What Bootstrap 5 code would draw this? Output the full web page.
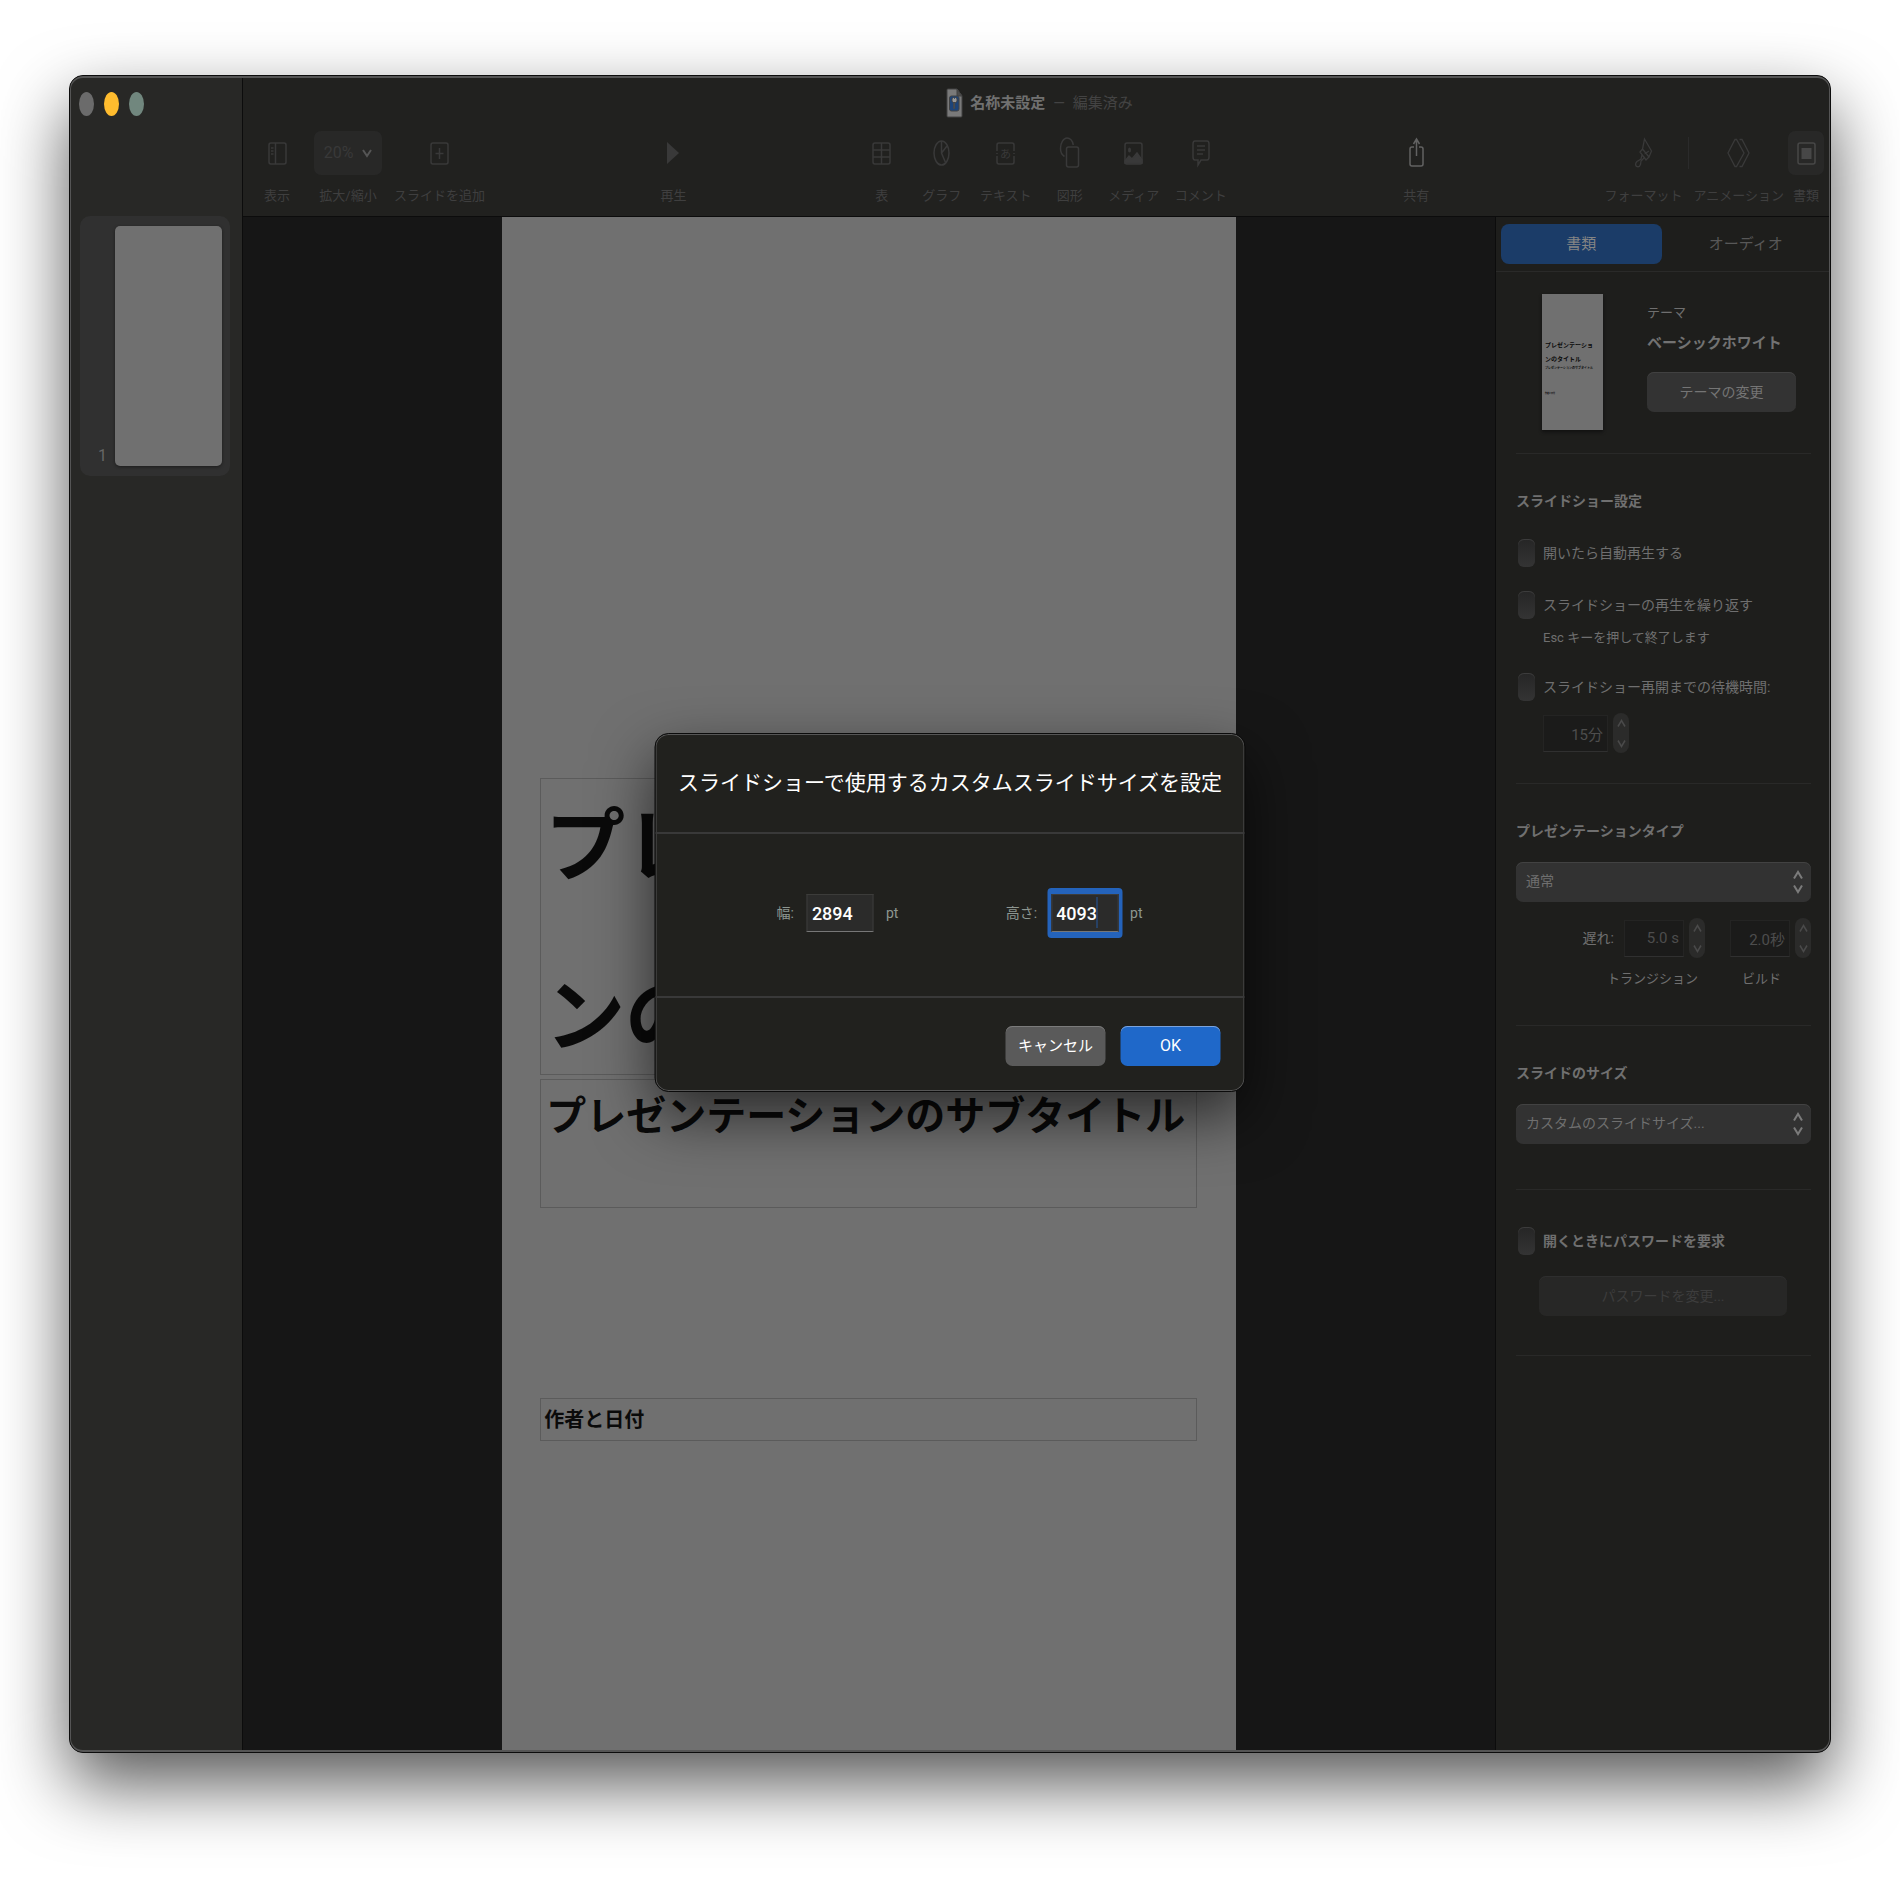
<!DOCTYPE html>
<html lang="ja">
<head>
<meta charset="utf-8">
<meta name="viewport" content="width=device-width, initial-scale=1">
<title>名称未設定</title>
<link href="https://cdn.jsdelivr.net/npm/bootstrap@5.3.0/dist/css/bootstrap.min.css" rel="stylesheet">
<style>
body{background:#fff;font-family:Roboto,"Noto Sans CJK JP",sans-serif;font-size:14px;line-height:20px;color:#6f6f6f;padding:75px 69px 147px}
svg{display:block;fill:none;stroke:currentColor;overflow:visible}
button,input,select{font:inherit;color:inherit}
/* window */
.app-window{background:#161616;border:1px solid #0c0c0c;border-radius:14px;box-shadow:0 31px 70px rgba(0,0,0,.66);overflow:clip}
.app-window::after{content:"";position:absolute;inset:0;border:solid #555;border-width:2px 1px;border-radius:13px;pointer-events:none}
.pane-slides{width:173px;background:#282826;border-right:1px solid #0c0c0c}
.lights{height:140px;padding:16px 0 0 9px;gap:10px}
.light{width:15px;height:24px;border:0;border-radius:50%;padding:0}
.light-close{background:#6b6b6b}.light-min{background:#ffbc2e}.light-zoom{background:#71877e}
.slide-item{margin:0 12px 0 10px;height:260px;padding:10px 8px 10px 0;background:#303030;border-radius:10px;font-size:16px;color:#666}
.slide-page{width:107px;background:#707070;border-radius:5px;box-shadow:0 1px 3px #1c1c1c}
/* toolbar */
.toolbar-top{height:141px;background:#21211f;border-bottom:1px solid #0c0c0c}
.doc-title{height:40px;margin-top:7px;padding-left:7px;gap:8px;font-size:15px;color:#434343}
.doc-title strong{color:#707070}
.tools{height:84px;margin-top:8px;padding:0 6px 0 21px;color:#363636}
.tool{border:0;background:none;padding:0;font-size:13px;line-height:20px;color:#3f3f3f;text-align:center}
.tool .glyph{height:44px;color:#393939}
.tool .glyph-share{color:#626262}
.tool .glyph-doc{width:36px;margin:0 auto;background:#282827;border-radius:7px;color:#474747}
.tool-name{display:block;margin-top:11px;white-space:nowrap}
.tool-zoom{width:68px}
.tool-zoom .glyph{background:#282827;border-radius:7px;gap:9px;font-size:16px}
.tool-zoom svg{color:#555}
.tool-sm{width:56px}.tool-md{width:64px}.tool-lg{width:70px}
.tools,.tools>div,.tool{align-items:flex-start}
.tool-gap{margin-left:4px}
.split{width:1px;height:32px;margin:6px 5px 0;background:#2b2b2b}
/* canvas */
.slide{width:58.6%;background:#707070;color:#0a0a0a;padding:561px 39px 0 38px;font-weight:700}
.ph{border:1px solid #5b5b5b;white-space:nowrap;overflow:visible}
.ph-title{height:297px;font-size:80px;line-height:170px;padding:10px 0 0 4px}
.ph-sub{height:129px;margin-top:4px;font-size:40px;line-height:58px;padding:8px 0 0 5px}
.ph-author{height:43px;margin-top:190px;font-size:20px;line-height:42px;padding-left:3px}
/* inspector */
.inspector{width:335px;background:#1e1e1c;border-left:1px solid #0c0c0c}
.tabs{height:55px;padding:7px 4px 0 5px;border-bottom:1px solid #2a2a29}
.tab{height:40px;border:0;border-radius:8px;background:none;font-size:15px;color:#585858}
.tab.on{background:#1b3c68;color:#858585}
.sect{margin:0 19px 0 20px;border-bottom:1px solid #292928}
.sect-theme{height:182px;padding:22px 15px 0 26px}
.theme-thumb{width:61px;height:136px;background:#707070;color:#0a0a0a;padding:44px 0 0 3px;font-weight:700;font-size:6px;line-height:14px;white-space:nowrap;box-shadow:0 2px 3px #111}
.theme-thumb .t-sub{font-size:3px;line-height:4px}
.theme-thumb .t-author{font-size:2px;line-height:4px;margin-top:21px}
.theme-info{width:149px;padding-top:9px}
.theme-kind,.small-caps-row{font-size:13px}
.theme-name{font-size:15px;color:#727272;margin:8px 0 17px;line-height:24px}
.push{height:40px;border:0;border-radius:7px;background:#333;box-shadow:inset 0 1px #414141;font-size:14px;color:#757575}
.push:disabled{background:#272726;color:#3d3d3d;box-shadow:inset 0 1px #2e2e2e}
.sect-show{height:330px;padding-top:37px}
.sect-type{height:242px;padding-top:37px}
.sect-size{height:164px;padding-top:37px}
.sect-pass{height:166px;padding-top:37px}
.sect h2{font-size:14px;line-height:20px;font-weight:700;margin:0;color:#707070}
.check{height:28px;gap:8px;padding-left:2px;white-space:nowrap}
.check-first{margin:28px 0 24px}
.check-wait{margin-top:25px}
.check input{appearance:none;flex:none;width:17px;height:28px;margin:0;border-radius:6px;background:linear-gradient(#262626,#343434);box-shadow:inset 0 1px #3c3c3c}
.note{font-size:13px;padding-left:27px;margin-top:9px}
.wait-row{padding:12px 0 0 27px}
.num{width:60px;height:37px;border:1px solid #242423;border-bottom-color:#303030;background:#1b1b1a;color:#4d4d4d;font-size:15px;text-align:right;padding:0 4px;border-radius:0}
.wait-row .num{width:65px}
.stepper{width:16px;height:40px;margin-left:5px;border-radius:8px;background:#2b2b2a;color:#4a4a4a}
.stepper button{flex:1;border:0;background:none;padding:0;display:flex;align-items:center;justify-content:center}
.delay-label{line-height:40px;margin-right:10px}
.delay-second{margin-left:25px}
.small-caps-row{gap:44px;padding:11px 30px 0 0}
.pop{margin-top:21px}
.pop select{appearance:none;width:100%;height:40px;border:0;border-radius:7px;background:#323232;box-shadow:inset 0 1px #424242;padding:0 28px 2px 10px;color:#6f6f6f;opacity:1}
.pop svg{position:absolute;right:8px;top:8px;color:#7b7b7b;pointer-events:none}
.pass-row{padding:21px 24px 0 23px}
/* sheet */
.sheet{position:absolute;left:50%;top:657px;transform:translateX(-50%);width:591px;height:359px;background:#21211e;border:1px solid #0b0b0b;border-radius:14px;box-shadow:inset 0 0 0 1px #565656,0 24px 60px rgba(0,0,0,.62);z-index:2}
.sheet-head{height:100px;border-bottom:2px solid #393939;font-size:21px;line-height:30px;color:#fff;font-weight:400;white-space:nowrap}
.sheet-body{height:164px;border-bottom:2px solid #393939;color:#8d9690;padding:0 102px 4px 121px}
.sheet-body label{margin-right:13px}
.sheet-body input{width:67px;height:38px;border:1px solid #3c3c3a;border-bottom:1px solid #777;background:#2b2b2a;color:#fff;font-size:18px;font-weight:500;padding:0 4px;border-radius:0}
.ring{border:solid #2463bb;border-width:6px 4px;border-radius:4px;margin-left:-3px}
.ring::after{content:"";position:absolute;left:45px;top:3px;width:1px;height:31px;background:#24589f}
.sheet-foot{height:93px;padding:2px 24px 0;gap:15px}
.sheet-foot button{width:100px;height:40px;border:0;border-radius:7px;font-size:15px;color:#fff}
.sheet-foot .b-cancel{background:#5a5a5a;box-shadow:inset 0 1px #7b7b7b}
.sheet-foot .b-ok{background:#1f68c9;box-shadow:inset 0 1px #7ba3dc;font-size:16px}
</style>
<script src="https://cdn.jsdelivr.net/npm/bootstrap@5.3.0/dist/js/bootstrap.bundle.min.js"></script>
</head>
<body class="min-vh-100 d-flex">
<main class="app-window position-relative d-flex flex-grow-1">
  <aside class="pane-slides flex-shrink-0">
    <div class="lights d-flex">
      <button class="light light-close" aria-label="閉じる"></button>
      <button class="light light-min" aria-label="しまう"></button>
      <button class="light light-zoom" aria-label="拡大"></button>
    </div>
    <div class="slide-item d-flex justify-content-end align-items-end gap-2">
      <span>1</span><div class="slide-page h-100"></div>
    </div>
  </aside>

  <div class="d-flex flex-column flex-grow-1">
    <header class="toolbar-top">
      <div class="doc-title d-flex justify-content-center align-items-center">
        <svg width="15" height="28" viewBox="0 0 15 28" stroke="none"><path d="M1 0h9l5 7v20a1 1 0 0 1-1 1H1a1 1 0 0 1-1-1V1a1 1 0 0 1 1-1z" fill="#7a7a7a"/><path d="M10 0v7h5z" fill="#4d4d4d"/><rect x="2.500" y="7" width="9.500" height="15" rx="2" fill="#1d4479"/><path d="M5 9.500l1.500-1 1 1 1-1 1.500 1v3l-1.500 1h-2L5 12.500zM6.700 13.500h1v6h-1z" fill="#999"/></svg>
        <strong>名称未設定</strong><span>—</span><span>編集済み</span>
      </div>
      <div class="tools d-flex justify-content-between">
        <div class="d-flex me-2">
          <button class="tool"><span class="glyph d-flex align-items-center justify-content-center"><svg width="19" height="23" viewBox="0 0 19 23" stroke-width="1.500"><rect x="1" y="1" width="17" height="21" rx="2"/><path d="M7.500 1v21M3 6h2.500M3 9h2.500M3 12h2.500"/></svg></span><span class="tool-name">表示</span></button>
          <button class="tool tool-zoom ms-4 me-2"><span class="glyph d-flex align-items-center justify-content-center">20%<svg width="10" height="9" viewBox="0 0 10 9" stroke-width="2"><path d="M1 1l4 6 4-6"/></svg></span><span class="tool-name">拡大/縮小</span></button>
          <button class="tool tool-gap"><span class="glyph d-flex align-items-center justify-content-center"><svg width="19" height="23" viewBox="0 0 19 23" stroke-width="1.500"><rect x="1" y="1" width="17" height="21" rx="2"/><path d="M9.500 6v11M5.500 11.500h8"/></svg></span><span class="tool-name">スライドを追加</span></button>
        </div>
        <button class="tool"><span class="glyph d-flex align-items-center justify-content-center"><svg width="12" height="22" viewBox="0 0 12 22"><path d="M0 0l12 11L0 22z" fill="currentColor" stroke="none"/></svg></span><span class="tool-name">再生</span></button>
        <div class="d-flex">
          <button class="tool tool-sm"><span class="glyph d-flex align-items-center justify-content-center"><svg width="19" height="23" viewBox="0 0 19 23" stroke-width="1.500"><rect x="1" y="1" width="17" height="21" rx="2"/><path d="M9.500 1v21M1 8h17M1 15h17"/></svg></span><span class="tool-name">表</span></button>
          <button class="tool tool-md"><span class="glyph d-flex align-items-center justify-content-center"><svg width="17" height="26" viewBox="0 0 17 26" stroke-width="1.500"><ellipse cx="8.500" cy="13" rx="7.500" ry="12"/><path d="M8.500 1v12l4 9.500M8.500 13l5.500-7"/></svg></span><span class="tool-name">グラフ</span></button>
          <button class="tool tool-md"><span class="glyph d-flex align-items-center justify-content-center"><svg width="19" height="23" viewBox="0 0 19 23" stroke-width="1.500"><path d="M1 9V3q0-2 2-2h13q2 0 2 2v6M1 14v6q0 2 2 2h13q2 0 2-2v-6M1 11v1M18 11v1"/><text x="9.500" y="15.500" text-anchor="middle" font-size="11" fill="currentColor" stroke="none">あ</text></svg></span><span class="tool-name">テキスト</span></button>
          <button class="tool tool-md"><span class="glyph d-flex align-items-center justify-content-center"><svg width="19" height="33" viewBox="0 0 19 33" stroke-width="1.500"><rect x="6.500" y="10" width="12" height="20" rx="2"/><path d="M4.500 19.500C2 18 .5 15 .5 11.500.5 6 3.500 1 7 1c3 0 5.500 3 6.300 7"/></svg></span><span class="tool-name">図形</span></button>
          <button class="tool tool-md"><span class="glyph d-flex align-items-center justify-content-center"><svg width="19" height="23" viewBox="0 0 19 23" stroke-width="1.500"><rect x="1" y="1" width="17" height="21" rx="2"/><path d="M1 19l4-5 3 3 5-6 5 7v3H1z" fill="currentColor"/><ellipse cx="5.500" cy="8" rx="1.500" ry="2.500" fill="currentColor" stroke="none"/></svg></span><span class="tool-name">メディア</span></button>
          <button class="tool tool-lg"><span class="glyph d-flex align-items-center justify-content-center"><svg width="18" height="26" viewBox="0 0 18 26" stroke-width="1.500"><path d="M3 1h12q2 0 2 3v13q0 3-2 3H9l-3 5v-5H3q-2 0-2-3V4q0-3 2-3zM5 6h8M5 10h8M5 14h6"/></svg></span><span class="tool-name">コメント</span></button>
        </div>
        <button class="tool"><span class="glyph glyph-share d-flex align-items-center justify-content-center"><svg width="15" height="30" viewBox="0 0 15 30" stroke-width="1.500"><path d="M5 9H3q-2 0-2 2v15q0 2 2 2h9q2 0 2-2V11q0-2-2-2h-2M7.500 18V1M4.500 6L7.500 1l3 5"/></svg></span><span class="tool-name">共有</span></button>
        <div class="d-flex ms-2">
          <button class="tool"><span class="glyph d-flex align-items-center justify-content-center"><svg width="17" height="30" viewBox="0 0 17 30" stroke-width="1.300"><path d="M9.500 1l7 12-2.500 6-6.500-8zM14 19l-6.500-8-2.500 3 6 8zM9.500 16l4.500-3M7 17l-1 4-4 2.500q-2.500 2.500-.5 5 3 1 4-2l.5-3.500 4-4"/></svg></span><span class="tool-name">フォーマット</span></button>
          <span class="split"></span>
          <button class="tool"><span class="glyph d-flex align-items-center justify-content-center"><svg width="23" height="30" viewBox="0 0 23 30" stroke-width="1.300"><path d="M8 1.500h1.500L17 15 9.500 28.500H8L1 15zM12.500 1.500H15L22 15l-7 13.500h-2.500"/></svg></span><span class="tool-name">アニメーション</span></button>
          <button class="tool tool-gap"><span class="glyph glyph-doc d-flex align-items-center justify-content-center"><svg width="19" height="23" viewBox="0 0 19 23" stroke-width="1.500"><rect x="1" y="1" width="17" height="21" rx="2"/><rect x="4.500" y="6" width="10" height="11" fill="currentColor" stroke="none"/></svg></span><span class="tool-name">書類</span></button>
        </div>
      </div>
    </header>

    <div class="d-flex flex-grow-1">
      <section class="d-flex justify-content-center flex-grow-1">
        <div class="slide">
          <div class="ph ph-title d-flex align-items-center"><div>プレゼンテーショ<br>ンのタイトル</div></div>
          <div class="ph ph-sub">プレゼンテーションのサブタイトル</div>
          <div class="ph ph-author">作者と日付</div>
        </div>
      </section>

      <aside class="inspector flex-shrink-0">
        <div class="tabs d-flex gap-1">
          <button class="tab on w-50">書類</button><button class="tab w-50">オーディオ</button>
        </div>
        <section class="sect sect-theme d-flex justify-content-between">
          <div class="theme-thumb"><div>プレゼンテーショ<br>ンのタイトル</div><div class="t-sub">プレゼンテーションのサブタイトル</div><div class="t-author">作者と日付</div></div>
          <div class="theme-info">
            <div class="theme-kind">テーマ</div>
            <div class="theme-name fw-bold">ベーシックホワイト</div>
            <button class="push w-100">テーマの変更</button>
          </div>
        </section>
        <section class="sect sect-show">
          <h2>スライドショー設定</h2>
          <label class="check check-first d-flex align-items-center"><input type="checkbox">開いたら自動再生する</label>
          <label class="check d-flex align-items-center"><input type="checkbox">スライドショーの再生を繰り返す</label>
          <div class="note">Esc キーを押して終了します</div>
          <label class="check check-wait d-flex align-items-center"><input type="checkbox">スライドショー再開までの待機時間:</label>
          <div class="wait-row d-flex align-items-center">
            <input class="num" value="15分" aria-label="待機時間">
            <div class="stepper d-flex flex-column"><button aria-label="増やす"><svg width="9" height="7" viewBox="0 0 9 7" stroke-width="1.500"><path d="M1 6.500l3.500-6 3.500 6"/></svg></button><button aria-label="減らす"><svg width="9" height="7" viewBox="0 0 9 7" stroke-width="1.500"><path d="M1 .5l3.500 6 3.500-6"/></svg></button></div>
          </div>
        </section>
        <section class="sect sect-type">
          <h2>プレゼンテーションタイプ</h2>
          <div class="pop position-relative"><select aria-label="プレゼンテーションタイプ"><option>通常</option></select><svg width="10" height="24" viewBox="0 0 10 24" stroke-width="2"><path d="M1 8.500l4-6.500 4 6.500M1 15.500l4 6.500 4-6.500"/></svg></div>
          <div class="d-flex justify-content-end align-items-center mt-3">
            <label for="delay" class="delay-label">遅れ:</label>
            <input class="num" id="delay" value="5.0 s">
            <div class="stepper d-flex flex-column"><button aria-label="増やす"><svg width="9" height="7" viewBox="0 0 9 7" stroke-width="1.500"><path d="M1 6.500l3.500-6 3.500 6"/></svg></button><button aria-label="減らす"><svg width="9" height="7" viewBox="0 0 9 7" stroke-width="1.500"><path d="M1 .5l3.500 6 3.500-6"/></svg></button></div>
            <input class="num delay-second" id="build" value="2.0秒">
            <div class="stepper d-flex flex-column"><button aria-label="増やす"><svg width="9" height="7" viewBox="0 0 9 7" stroke-width="1.500"><path d="M1 6.500l3.500-6 3.500 6"/></svg></button><button aria-label="減らす"><svg width="9" height="7" viewBox="0 0 9 7" stroke-width="1.500"><path d="M1 .5l3.500 6 3.500-6"/></svg></button></div>
          </div>
          <div class="small-caps-row d-flex justify-content-end"><label for="delay">トランジション</label><label for="build">ビルド</label></div>
        </section>
        <section class="sect sect-size">
          <h2>スライドのサイズ</h2>
          <div class="pop position-relative"><select aria-label="スライドのサイズ"><option>カスタムのスライドサイズ...</option></select><svg width="10" height="24" viewBox="0 0 10 24" stroke-width="2"><path d="M1 8.500l4-6.500 4 6.500M1 15.500l4 6.500 4-6.500"/></svg></div>
        </section>
        <section class="sect sect-pass">
          <label class="check d-flex align-items-center fw-bold"><input type="checkbox">開くときにパスワードを要求</label>
          <div class="pass-row"><button class="push w-100" disabled>パスワードを変更...</button></div>
        </section>
      </aside>
    </div>
  </div>

  <div class="sheet" role="dialog" aria-labelledby="sheet-title">
    <h1 class="sheet-head d-flex align-items-center justify-content-center m-0" id="sheet-title">スライドショーで使用するカスタムスライドサイズを設定</h1>
    <div class="sheet-body d-flex align-items-center justify-content-between">
      <div class="d-flex align-items-center"><label for="sw">幅:</label><input id="sw" value="2894"><span class="ms-2 ps-1">pt</span></div>
      <div class="d-flex align-items-center"><label for="sh">高さ:</label><div class="ring position-relative"><input id="sh" class="d-block" value="4093"></div><span class="ms-2">pt</span></div>
    </div>
    <div class="sheet-foot d-flex align-items-center justify-content-end">
      <button class="b-cancel">キャンセル</button><button class="b-ok">OK</button>
    </div>
  </div>
</main>
</body>
</html>
